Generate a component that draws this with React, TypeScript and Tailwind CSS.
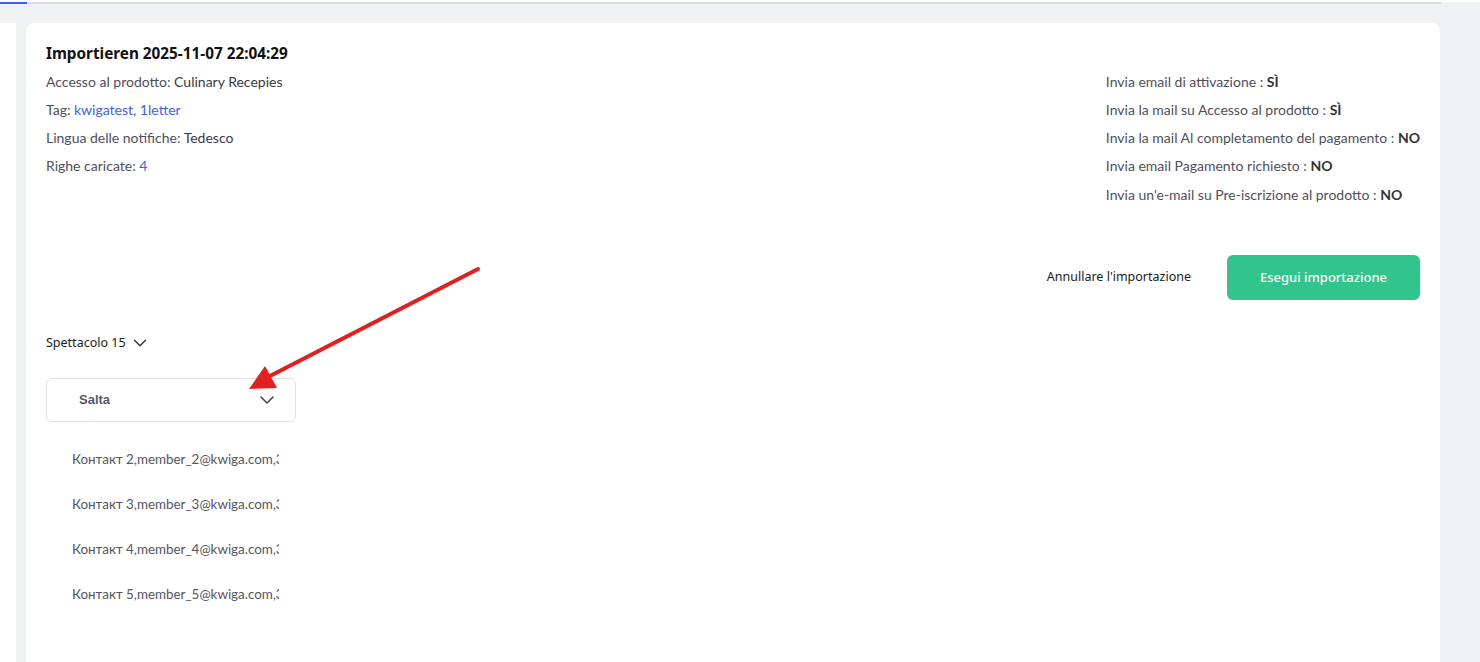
import { ChevronDown } from "lucide-react";

const leftRows = [
  { label: "Accesso al prodotto:", value: "Culinary Recepies" },
  { label: "Lingua delle notifiche:", value: "Tedesco" },
];

const emailFlags = [
  { label: "Invia email di attivazione", value: "SÌ" },
  { label: "Invia la mail su Accesso al prodotto", value: "SÌ" },
  { label: "Invia la mail Al completamento del pagamento", value: "NO" },
  { label: "Invia email Pagamento richiesto", value: "NO" },
  { label: "Invia un'e-mail su Pre-iscrizione al prodotto", value: "NO" },
];

const contacts = [2, 3, 4, 5];

const lato = "font-['Lato','Open_Sans',sans-serif]";
const ubuntu = "font-['Noto_Sans','Open_Sans',sans-serif]";

export default function App() {
  return (
    <div className="relative h-[662px] overflow-hidden bg-[#eff1f3]">
      {/* Top tab line */}
      <div className="h-[2px] bg-white" />
      <div className="flex h-[2px]">
        <div className="w-[27px] bg-[#3d63f2]" />
        <div className="w-[1414px] bg-[#dcdee2]" />
      </div>

      <div className="flex gap-[10px] pt-[19px]">
        {/* Left rail */}
        <div className="w-[16px] h-[700px] bg-white" />

        {/* Main card */}
        <div className="flex-1 mr-[40px] h-[700px] rounded-t-lg bg-white px-5 pt-[20px]">
          <h1 className={`${ubuntu} text-[15.3px] leading-[20px] font-bold text-[#111]`}>
            Importieren 2025-11-07 22:04:29
          </h1>

          <div className={`${lato} mt-[5px] flex justify-between text-[14px] text-[#4f4f5c]`}>
            <div className="flex flex-col">
              <p className="leading-[28px]">
                {leftRows[0].label} <span className="text-[#3a3a44]">{leftRows[0].value}</span>
              </p>
              <p className="leading-[28px]">
                Tag: <span className="text-[#3f5ef5]">kwigatest</span>,{" "}
                <span className="text-[#3f5ef5]">1letter</span>
              </p>
              <p className="leading-[28px]">
                {leftRows[1].label} <span className="text-[#3a3a44]">{leftRows[1].value}</span>
              </p>
              <p className="leading-[28px]">
                Righe caricate: <span className="text-[#3f5ef5]">4</span>
              </p>
            </div>

            <div className="flex flex-col whitespace-nowrap">
              {emailFlags.map((f, i) => (
                <p key={i} className={`leading-[28px] ${i === 4 ? "mt-[1px]" : ""}`}>
                  {f.label} : <span className="font-bold text-[#333]">{f.value}</span>
                </p>
              ))}
            </div>
          </div>

          {/* Actions */}
          <div className={`${ubuntu} mt-[46px] flex items-center justify-end gap-[36px] text-[12.5px]`}>
            <button className="text-[#1a1a1a]">Annullare l'importazione</button>
            <button className="h-[45px] w-[193px] rounded-md bg-[#31c48d] text-[13px] font-medium text-white">
              Esegui importazione
            </button>
          </div>

          {/* Show selector */}
          <div className={`${ubuntu} mt-[33px] flex h-[20px] items-center gap-[3px] text-[12.5px] text-[#1a1a1a]`}>
            <span>Spettacolo 15</span>
            <ChevronDown size={22} strokeWidth={1.5} className="text-[#333]" />
          </div>

          {/* Select */}
          <div className="mt-[25px] flex h-[44px] w-[250px] items-center justify-between rounded-md border border-[#e2e0ea] pl-[32px] pr-[16px]">
            <span className="font-['Liberation_Sans',Arial,sans-serif] text-[13px] font-bold text-[#555a66]">
              Salta
            </span>
            <ChevronDown size={24} strokeWidth={1.5} className="text-[#444]" />
          </div>

          {/* Rows */}
          <div className={`${lato} mt-[15px] flex flex-col pl-[26px] text-[13.4px] text-[#555560]`}>
            {contacts.map((n) => (
              <div key={n} className="flex h-[45px] items-center">
                <div className="w-[207px] overflow-hidden whitespace-nowrap">
                  Контакт {n},member_{n}@kwiga.com,3
                </div>
              </div>
            ))}
          </div>
        </div>
      </div>

      {/* Annotation arrow */}
      <svg
        className="pointer-events-none absolute left-0 top-0"
        width="1480"
        height="662"
        viewBox="0 0 1480 662"
      >
        <line x1="478" y1="269" x2="268" y2="377" stroke="#e41e1e" strokeWidth="4" strokeLinecap="round" />
        <polygon points="265,366 249,389 277,388" fill="#e41e1e" />
      </svg>
    </div>
  );
}
